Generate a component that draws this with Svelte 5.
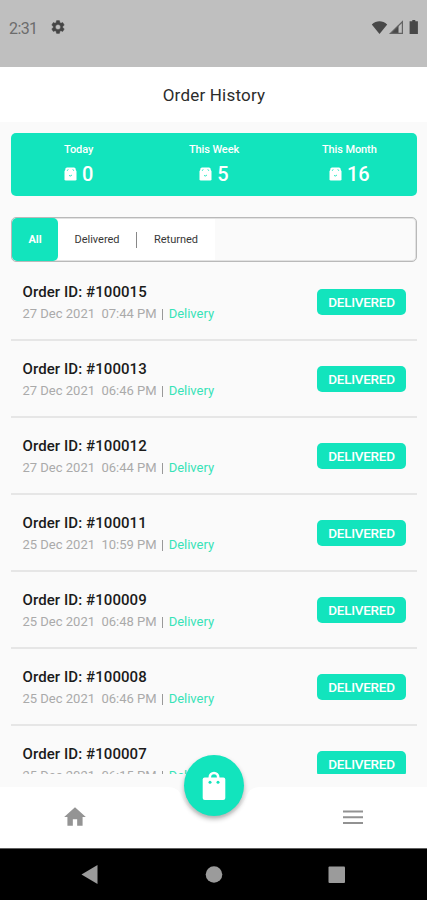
<script>
  const stats = [
    { label: 'Today', value: 0 },
    { label: 'This Week', value: 5 },
    { label: 'This Month', value: 16 }
  ];
  const orders = [
    { id: 100015, date: '27 Dec 2021', time: '07:44 PM' },
    { id: 100013, date: '27 Dec 2021', time: '06:46 PM' },
    { id: 100012, date: '27 Dec 2021', time: '06:44 PM' },
    { id: 100011, date: '25 Dec 2021', time: '10:59 PM' },
    { id: 100009, date: '25 Dec 2021', time: '06:48 PM' },
    { id: 100008, date: '25 Dec 2021', time: '06:46 PM' },
    { id: 100007, date: '25 Dec 2021', time: '06:15 PM' }
  ];
  let tab = $state('All');
</script>

<div class="screen">
  <div class="status">
    <span class="clock">2:31</span>
    <svg class="gear" width="16" height="16" viewBox="0 0 24 24"><path fill="#454545" stroke="#454545" stroke-width=".6" fill-rule="evenodd" d="M19.14 12.94c.04-.3.06-.61.06-.94s-.02-.64-.07-.94l2.03-1.58c.18-.14.23-.41.12-.61l-1.92-3.32c-.12-.22-.37-.29-.59-.22l-2.39.96c-.5-.38-1.03-.7-1.62-.94l-.36-2.54c-.04-.24-.24-.41-.48-.41h-3.84c-.24 0-.43.17-.47.41l-.36 2.54c-.59.24-1.13.57-1.62.94l-2.39-.96c-.22-.08-.47 0-.59.22L2.74 8.87c-.12.21-.08.47.12.61l2.03 1.58c-.05.3-.09.63-.09.94s.02.64.07.94l-2.03 1.58c-.18.14-.23.41-.12.61l1.92 3.32c.12.22.37.29.59.22l2.39-.96c.5.38 1.03.7 1.62.94l.36 2.54c.05.24.24.41.48.41h3.84c.24 0 .44-.17.47-.41l.36-2.54c.59-.24 1.13-.56 1.62-.94l2.39.96c.22.08.47 0 .59-.22l1.92-3.32c.12-.22.07-.47-.12-.61zM12 15.8a3.8 3.8 0 1 1 0-7.6 3.8 3.8 0 0 1 0 7.600z"/></svg>
    <svg class="signals" width="50" height="16" viewBox="0 0 50 16">
      <path fill="#484848" d="M.8 4.4C5.4.2 11.600.2 16.200 4.400L8.500 14z"/>
      <path fill="#484848" d="M18.500 14 27.500 5v9z"/>
      <path fill="none" stroke="#636363" stroke-width="1.200" d="M19.500 13.400 31.400 1.700v11.700z"/>
      <path fill="#484848" d="M41.300 1.300V0h3v1.300h2.600V14h-8.300V1.300z"/>
    </svg>
  </div>

  <header>Order History</header>

  <main>
    <section class="summary">
      {#each stats as s}
        <div class="stat">
          <span class="label">{s.label}</span>
          <span class="value">
            <svg width="13" height="14" viewBox="0 0 13 14"><path fill="#fff" d="M3 .5h7q.8 0 1.200.8L12.500 4.500v7.700q0 1.300-1.300 1.300H1.800Q.5 13.500.5 12.200V4.500L1.800 1.300Q2.200.5 3 .5z"/><path fill="none" stroke="#12e4bd" stroke-width=".9" d="M3.200 3.800 4.200 2.300M9.800 3.800 8.800 2.300M5 8.300l1.200.8L8 8"/></svg>
            {s.value}
          </span>
        </div>
      {/each}
    </section>

    <div class="tabs">
      <button class="all" class:active={tab === 'All'} onclick={() => (tab = 'All')}>All</button>
      <button class="delivered" onclick={() => (tab = 'Delivered')}>Delivered</button>
      <span class="divider"><i></i></span>
      <button class="returned" onclick={() => (tab = 'Returned')}>Returned</button>
    </div>

    <div class="list">
      {#each orders as o}
        <article>
          <div class="info">
            <div class="title">Order ID: #{o.id}</div>
            <div class="meta"><span class="date">{o.date}&nbsp; {o.time}</span><b></b><span class="kind">Delivery</span></div>
          </div>
          <span class="badge">DELIVERED</span>
        </article>
      {/each}
    </div>
  </main>

  <nav>
    <svg class="notch" width="427" height="62" viewBox="0 0 427 62"><path fill="#fff" d="M0 0H167C175 0 179 3 181 8A35 35 0 0 0 247 8C249 3 253 0 261 0H427V62H0z"/></svg>
    <svg class="home" width="26" height="26" viewBox="0 0 24 24"><path fill="#949494" d="M10 20v-6h4v6h5v-8h3L12 3 2 12h3v8z"/></svg>
    <button class="fab" aria-label="Orders">
      <svg width="24" height="30" viewBox="0 0 24 30"><path fill="none" stroke="#fff" stroke-width="2.600" d="M7.800 8V6.200a4.200 4.200 0 0 1 8.400 0V8"/><path fill="#fff" d="M2.600 6.500h18.800Q23.300 6.500 23.300 8.400V27q0 2.100-2.100 2.100H2.800Q.7 29.100.7 27V8.400Q.7 6.500 2.600 6.500z"/><circle cx="8" cy="11.200" r="1.500" fill="#12e4bd"/><circle cx="16" cy="11.200" r="1.500" fill="#12e4bd"/></svg>
    </button>
    <svg class="menu" width="20" height="15" viewBox="0 0 20 15"><path stroke="#929292" stroke-width="2" d="M0 1.500h20M0 7.200h20M0 12.900h20"/></svg>
  </nav>

  <footer>
    <svg width="427" height="51" viewBox="0 0 427 51"><g fill="#9b9b9b"><path d="M81.500 25.500 97.500 16v19z"/><circle cx="214" cy="25.500" r="8.300"/><rect x="328.500" y="17.500" width="16.500" height="16.500" rx="1"/></g></svg>
  </footer>
</div>

<style>
  .screen { width: 427px; height: 900px; overflow: hidden; display: flex; flex-direction: column; background: #fafafa; font-family: Roboto, sans-serif; color: #222; }
  svg { display: block; flex: none; }
  button { border: 0; padding: 0; margin: 0; font: inherit; color: inherit; background: none; }
  .status { height: 67px; flex: none; box-sizing: border-box; background: #bfbfbf; display: flex; align-items: flex-start; padding: 19px 6px 0 9px; }
  .clock { width: 41px; font-size: 16px; line-height: 19px; letter-spacing: -.6px; color: #6c6c6c; }
  .signals { margin: 1px 0 0 auto; }
  header { height: 55px; flex: none; background: #fff; line-height: 56px; padding-left: 1px; text-align: center; font-size: 17px; letter-spacing: .2px; color: #2c2c2c; }
  main { height: 652px; flex: none; display: flex; flex-direction: column; box-sizing: border-box; padding: 11px 10px 0 11px; overflow: hidden; }
  .summary { height: 63px; flex: none; background: #12e4bd; border-radius: 5px; display: flex; color: #fff; }
  .stat { flex: 1; display: flex; flex-direction: column; align-items: center; }
  .label { font-size: 11px; font-weight: 500; letter-spacing: -.1px; line-height: 14px; margin-top: 10px; }
  .value { display: flex; align-items: center; gap: 5px; font-size: 20px; font-weight: 500; line-height: 24px; margin-top: 5px; }
  .tabs { height: 45px; flex: none; box-sizing: border-box; margin-top: 21px; border: 1px solid #b9b9b9; box-shadow: inset 0 0 0 1px #e2e2e2; border-radius: 5px; display: flex; align-items: center; overflow: hidden; font-size: 11px; color: #383838; }
  .tabs button { height: 41px; background: #fff; }
  .tabs .all { width: 46px; height: 43px; border-radius: 5px; }
  .tabs .active { background: #12e4bd; color: #fff; font-weight: 700; }
  .tabs .delivered { width: 78px; }
  .divider { height: 41px; display: flex; align-items: center; background: #fff; }
  .divider i { width: 1px; height: 16px; background: #888; }
  .tabs .returned { width: 78px; }
  .list { flex: none; margin-top: 2px; }
  article { height: 77px; box-sizing: border-box; border-bottom: 2px solid #e6e6e6; display: flex; justify-content: space-between; align-items: flex-start; padding: 18px 11px 0 11.500px; }
  .title { font-size: 15px; line-height: 20px; font-weight: 500; letter-spacing: .08px; color: #1b1b1b; }
  .meta { display: flex; align-items: center; margin-top: 2px; font-size: 13px; line-height: 20px; color: #aaa; }
  .date { white-space: pre; }
  .meta b { width: 1px; height: 11px; margin: 0 6px 0 5px; background: #999; }
  .kind { color: #38e3b7; }
  .badge { width: 89px; height: 26px; margin-top: 7px; background: #12e4bd; border-radius: 5px; color: #fff; font-size: 13.500px; font-weight: 500; letter-spacing: -.25px; line-height: 26px; text-align: center; }
  nav { position: relative; height: 61px; margin-top: 13px; flex: none; display: flex; justify-content: space-between; box-sizing: border-box; padding: 17px 64px 0 62px; }
  .notch { position: absolute; left: 0; top: 0; }
  .home, .menu { position: relative; }
  .menu { margin-top: 6px; }
  .fab { position: absolute; left: 184px; top: -32px; width: 60px; height: 61px; border-radius: 50%; background: #12e4bd; box-shadow: 0 3px 5px rgba(0,0,0,.3); display: flex; align-items: center; justify-content: center; }
  footer { position: relative; height: 52px; box-sizing: border-box; border-top: 1px solid #606060; background: #000; flex: none; }
</style>
